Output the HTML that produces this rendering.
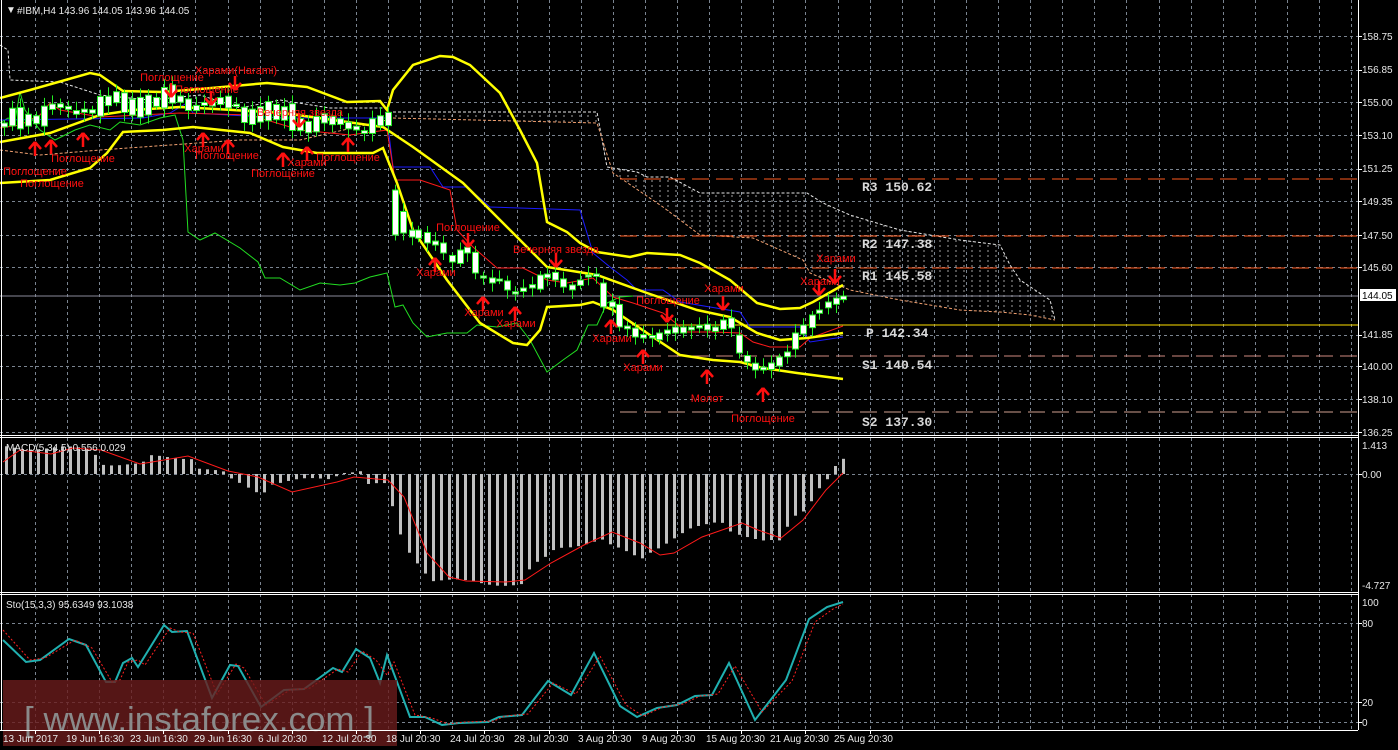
<!DOCTYPE html>
<html><head><meta charset="utf-8">
<style>
html,body{margin:0;padding:0;background:#000;}
body{width:1398px;height:750px;overflow:hidden;position:relative;font-family:"Liberation Sans","Noto Sans CJK SC",sans-serif;}
svg{position:absolute;left:0;top:0;}
.ax{fill:#e8e8e8;font-size:10px;font-family:"Liberation Sans",sans-serif;}
.lb{fill:#ff1010;font-size:11px;font-family:"Liberation Sans",sans-serif;}
.pv{fill:#d8d8d8;font-size:13px;font-weight:bold;font-family:"Liberation Mono",monospace;}
</style></head><body>
<svg id="s" width="1398" height="750" viewBox="0 0 1398 750" xmlns="http://www.w3.org/2000/svg">
<defs>
<pattern id="hat" width="8" height="5" patternUnits="userSpaceOnUse">
<line x1="4" y1="0" x2="4" y2="2" stroke="#d8d8d8" stroke-width="1"/>
</pattern>
<clipPath id="cmain"><rect x="0" y="0" width="1358" height="435"/></clipPath>
</defs>
<g id="grid"></g>
<g clip-path="url(#cmain)">
<polygon points="393,112 597,112 607,167 637,172 647,177 670,177 700,193 807,193 823,203 850,215 900,230 960,240 1000,245 1010,265 1020,280 1050,300 1055,320 1030,315 1000,312 960,310 900,300 850,290 810,273 803,260 753,238 700,235 663,207 613,173 597,123 393,118" fill="url(#hat)" opacity="0.75"/>
<polyline points="393,112 597,112 607,167 637,172 647,177 670,177 700,193 807,193 823,203 850,215 900,230 960,240 1000,245 1010,265 1020,280 1050,300 1055,320" fill="none" stroke="#e6e6e6" stroke-width="1" stroke-dasharray="3,2"/>
<polyline points="393,118 597,123 613,173 663,207 700,235 753,238 803,260 810,273 850,290 900,300 960,310 1000,312 1030,315 1055,320" fill="none" stroke="#f0a070" stroke-width="1" stroke-dasharray="3,2"/>
<polyline points="0,45 8,50 10,80 60,82 100,95 150,100 200,95 240,108 280,100 330,108 387,108" fill="none" stroke="#e6e6e6" stroke-width="1" stroke-dasharray="3,2"/>
<polyline points="0,150 40,155 100,150 170,145 240,140 300,140 387,120" fill="none" stroke="#f0a070" stroke-width="1" stroke-dasharray="3,2"/>
</g>
<line x1="620" y1="179" x2="1358" y2="179" stroke="#ff5a1e" stroke-dasharray="17,7"/>
<line x1="620" y1="236" x2="1358" y2="236" stroke="#ff5a1e" stroke-dasharray="17,7"/>
<line x1="620" y1="268" x2="1358" y2="268" stroke="#ff5a1e" stroke-dasharray="17,7"/>
<line x1="632" y1="325" x2="1358" y2="325" stroke="#ffe000"/>
<line x1="620" y1="356" x2="1358" y2="356" stroke="#d08a80" stroke-dasharray="17,7"/>
<line x1="620" y1="412" x2="1358" y2="412" stroke="#d0a090" stroke-dasharray="17,7"/>
<line x1="0" y1="296" x2="1358" y2="296" stroke="#8a8a9a"/>
<text class="pv" x="862" y="191">R3 150.62</text>
<text class="pv" x="862" y="248">R2 147.38</text>
<text class="pv" x="862" y="280">R1 145.58</text>
<text class="pv" x="866" y="337">P 142.34</text>
<text class="pv" x="862" y="369">S1 140.54</text>
<text class="pv" x="862" y="426">S2 137.30</text>
<polyline fill="none" stroke="#22dd22" stroke-width="1" points="0,123 8,118 15,120 20,92 25,110 40,130 55,140 65,135 75,130 90,125 110,130 120,122 140,125 160,118 175,115 183,140 188,232 200,240 215,233 240,248 258,262 265,278 280,278 300,290 320,283 340,285 355,283 370,277 387,273 395,307 403,305 413,323 427,337 447,333 467,333 477,325 497,327 517,323 530,340 547,372 563,360 577,350 588,325 597,325 607,303 620,297 633,296"/>
<polyline fill="none" stroke="#1a1aff" stroke-width="1" points="0,120 143,118 170,113 187,103 193,113 283,118 387,118 393,167 430,167 443,187 467,187 490,207 580,210 593,253 610,267 627,280 637,290 663,290 680,302 740,312 750,327 800,327 810,342 843,337"/>
<polyline fill="none" stroke="#ff1a1a" stroke-width="1" points="0,128 20,125 40,115 50,103 60,110 100,117 180,113 250,115 300,130 350,135 387,130 395,180 420,180 450,190 457,230 473,247 497,268 523,268 547,280 567,283 593,278 613,297 633,303 663,313 687,332 713,332 740,333 753,342 770,347 800,347 810,338 843,326"/>
<g fill="none" stroke="#ffff00" stroke-width="2.5">
<polyline points="0,98 30,90 90,73 100,75 123,91 163,92 200,89 267,83 307,87 347,102 380,101 387,110 393,90 413,65 440,56 453,57 470,65 500,93 520,130 537,163 547,222 567,232 580,243 597,252 630,257 647,253 680,255 700,263 730,280 757,303 780,309 800,308 813,302 843,285"/>
<polyline points="0,142 50,133 100,115 133,110 180,107 233,110 283,113 333,120 383,127 413,147 463,183 513,233 547,267 597,275 647,293 697,310 730,317 757,333 780,340 807,338 843,333"/>
<polyline points="0,183 50,180 90,168 107,153 123,132 163,130 193,127 250,133 283,147 317,153 373,153 383,148 397,183 413,230 447,280 480,323 513,343 527,345 540,330 547,307 580,305 593,302 613,310 647,333 680,355 713,360 740,362 763,368 797,373 843,379"/>
</g>
<g id="candles"></g>
<g id="arrows" fill="#ff1010" stroke="#ff1010"></g>
<g class="lb" text-anchor="middle">
<text x="172" y="81">Поглощение</text>
<text x="236" y="74">Харами(Harami)</text>
<text x="207" y="93">Поглощение</text>
<text x="300" y="116">Вечерняя звезда</text>
<text x="83" y="162">Поглощение</text>
<text x="35" y="175">Поглощение</text>
<text x="52" y="187">Поглощение</text>
<text x="204" y="152">Харами</text>
<text x="227" y="159">Поглощение</text>
<text x="283" y="177">Поглощение</text>
<text x="307" y="166">Харами</text>
<text x="348" y="161">Поглощение</text>
<text x="468" y="231">Поглощение</text>
<text x="436" y="276">Харами</text>
<text x="556" y="253">Вечерняя звезда</text>
<text x="484" y="316">Харами</text>
<text x="516" y="327">Харами</text>
<text x="612" y="342">Харами</text>
<text x="668" y="304">Поглощение</text>
<text x="643" y="371">Харами</text>
<text x="724" y="292">Харами</text>
<text x="707" y="402">Молот</text>
<text x="763" y="422">Поглощение</text>
<text x="836" y="262">Харами</text>
<text x="820" y="285">Харами</text>
</g>
<g id="macd" fill="#c0c0c0"></g>
<polyline fill="none" stroke="#ff1a1a" stroke-width="1" points="3,462 20,450 51,454 73,448 101,450 140,464 188,456 228,471 258,477 292,492 337,482 354,477 388,480 404,497 427,553 449,577 466,581 506,582 525,580 551,563 584,545 612,532 640,543 660,555 674,553 702,537 742,523 758,530 781,538 803,520 826,490 843,473"/>
<polyline fill="none" stroke="#20b0b0" stroke-width="2" points="3,640 26,662 40,660 69,639 86,645 106,682 115,682 123,663 132,658 138,667 164,625 172,632 187,631 212,698 230,665 238,666 261,707 284,690 304,689 333,668 342,672 356,649 370,658 380,683 387,655 410,717 425,717 442,725 459,723 488,722 499,717 522,715 548,681 571,695 594,653 620,706 637,717 657,708 677,705 695,696 712,695 729,663 755,720 786,680 809,619 827,607 843,602"/>
<polyline fill="none" stroke="#ff2020" stroke-width="1" stroke-dasharray="2,2" points="3,630 30,660 45,658 75,640 92,648 112,682 120,680 128,662 138,660 145,665 170,628 180,632 193,633 217,694 236,664 244,668 266,705 290,690 310,688 338,669 348,672 362,651 376,660 387,675 394,662 415,715 432,718 448,724 465,722 494,721 505,716 528,714 553,683 576,694 600,656 626,705 643,716 663,707 683,704 700,696 718,694 735,666 762,712 792,681 815,622 833,609 843,604"/>
<rect x="3" y="680" width="394" height="66" fill="#6a1c1c" opacity="0.8"/>
<text x="24" y="731" fill="#8a8a8a" font-size="34" font-family="Liberation Sans,sans-serif" textLength="350" lengthAdjust="spacingAndGlyphs">[ www.instaforex.com ]</text>
<g stroke="#ffffff" stroke-width="1" fill="none">
<line x1="1358.5" y1="0" x2="1358.5" y2="730"/>
<line x1="0" y1="435.5" x2="1358" y2="435.5"/>
<line x1="0" y1="437.5" x2="1358" y2="437.5"/>
<line x1="0" y1="592.5" x2="1358" y2="592.5"/>
<line x1="0" y1="594.5" x2="1358" y2="594.5"/>
<line x1="0" y1="730.5" x2="1358" y2="730.5"/>
<line x1="1.5" y1="0" x2="1.5" y2="730"/>
</g>
<g id="axis"></g>
<text x="6" y="13" class="ax" font-size="9">▼</text>
<text x="17" y="14" class="ax">#IBM,H4  143.96 144.05 143.96 144.05</text>
<text x="6" y="451" class="ax" fill="#ddd">MACD(5,34,5) 0.556 0.029</text>
<text x="6" y="608" class="ax">Sto(15,3,3) 95.6349 93.1038</text>
<rect x="1360" y="289" width="36" height="12" fill="#fff"/>
<text x="1362" y="299" font-size="10" fill="#000" font-family="Liberation Sans,sans-serif">144.05</text>
<g class="ax">
<text x="1362" y="40">158.75</text><text x="1362" y="73">156.85</text><text x="1362" y="106">155.00</text>
<text x="1362" y="139">153.10</text><text x="1362" y="172">151.25</text><text x="1362" y="205">149.35</text>
<text x="1362" y="239">147.50</text><text x="1362" y="271">145.60</text><text x="1362" y="338">141.85</text>
<text x="1362" y="370">140.00</text><text x="1362" y="403">138.10</text><text x="1362" y="436">136.25</text>
<text x="1362" y="449">1.413</text><text x="1362" y="478">0.00</text><text x="1362" y="589">-4.727</text>
<text x="1362" y="606">100</text><text x="1362" y="627">80</text><text x="1362" y="706">20</text><text x="1362" y="726">0</text>
</g>
<g class="ax" font-size="9.5">
<text x="3" y="742">13 Jun 2017</text><text x="66" y="742">19 Jun 16:30</text><text x="130" y="742">23 Jun 16:30</text>
<text x="194" y="742">29 Jun 16:30</text><text x="258" y="742">6 Jul 20:30</text><text x="322" y="742">12 Jul 20:30</text>
<text x="386" y="742">18 Jul 20:30</text><text x="450" y="742">24 Jul 20:30</text><text x="514" y="742">28 Jul 20:30</text>
<text x="578" y="742">3 Aug 20:30</text><text x="642" y="742">9 Aug 20:30</text><text x="706" y="742">15 Aug 20:30</text>
<text x="770" y="742">21 Aug 20:30</text><text x="834" y="742">25 Aug 20:30</text>
</g>
</svg>
<script>
(function(){
var NS="http://www.w3.org/2000/svg";
function el(p,t,a){var e=document.createElementNS(NS,t);for(var k in a)e.setAttribute(k,a[k]);p.appendChild(e);return e;}
var g=document.getElementById('grid');
var gc="#7a8490";
for(var x=35;x<1358;x+=32.1){el(g,'line',{x1:Math.round(x)+.5,y1:0,x2:Math.round(x)+.5,y2:730,stroke:gc,'stroke-dasharray':'3,3'});}
[36,70,102,135,169,201,235,267,335,366,399,432,474,623,702,722].forEach(function(y){el(g,'line',{x1:0,y1:y+.5,x2:1358,y2:y+.5,stroke:gc,'stroke-dasharray':'3,3'});});
var ax=document.getElementById('axis');
[36,70,102,135,169,201,235,267,335,366,399,432,474,623,702,722].forEach(function(y){el(ax,'line',{x1:1358,y1:y+.5,x2:1362,y2:y+.5,stroke:'#fff'});});
for(var i=0;i<14;i++){var xx=35+64.2*i;el(ax,'line',{x1:Math.round(xx)+.5,y1:730,x2:Math.round(xx)+.5,y2:734,stroke:'#fff'});}
var c=document.getElementById('candles');
function mid(x){var p=[[0,120],[50,112],[100,105],[133,103],[180,100],[233,108],[283,118],[333,125],[387,125]];for(var i=1;i<p.length;i++){if(x<=p[i][0]){var t=(x-p[i-1][0])/(p[i][0]-p[i-1][0]);return p[i-1][1]+t*(p[i][1]-p[i-1][1]);}}return 125;}
var cl=[];
for(var x=4;x<390;x+=8){var m=mid(x)+9*Math.sin(x*0.37)+6*Math.cos(x*0.9);cl.push([x,m]);}
var L=[[395,212],[403,233],[412,237],[418,230],[427,243],[435,245],[443,253],[452,262],[460,250],[467,253],[475,273],[483,278],[492,283],[499,280],[507,290],[515,293],[523,288],[532,287],[540,275],[547,275],[555,280],[563,287],[572,285],[580,280],[588,275],[596,275],[603,303],[612,307],[619,327],[627,326],[635,337],[643,338],[652,337],[659,333],[667,330],[675,333],[683,327],[691,327],[699,327],[707,330],[715,327],[723,320],[731,328],[739,353],[747,362],[755,370],[763,370],[771,363],[779,357],[787,352],[795,333],[803,325],[812,315],[819,310],[828,302],[836,298],[843,296]];
cl=cl.concat(L);
for(var i=0;i<cl.length;i++){
 var x=cl[i][0],y=cl[i][1],prev=i?cl[i-1][1]:y+4;
 var o=prev+3*Math.sin(i*1.7),top=Math.min(o,y),bot=Math.max(o,y);
 if(x==395){top=190;bot=235;}
 if(x==603){top=283;bot=307;}
 if(x==739){top=335;bot=353;}
 if(bot-top<2){top-=1;bot+=1;}
 var wt=top-3-6*Math.abs(Math.sin(i*2.3)),wb=bot+3+6*Math.abs(Math.cos(i*1.9));
 el(c,'line',{x1:x+.5,y1:wt,x2:x+.5,y2:wb,stroke:'#22ee22'});
 el(c,'rect',{x:x-2.5,y:top,width:6,height:bot-top,fill:'#fff',stroke:'#22ee22','stroke-width':1});
}
var a=document.getElementById('arrows');
function up(x,y){el(a,'path',{d:'M'+x+' '+y+' l-6 7 M'+x+' '+y+' l6 7 M'+x+' '+y+' v14','stroke-width':2.5,fill:'none'});}
function dn(x,y){el(a,'path',{d:'M'+x+' '+y+' l-6 -7 M'+x+' '+y+' l6 -7 M'+x+' '+y+' v-14','stroke-width':2.5,fill:'none'});}
[[35,142],[51,140],[83,133],[203,133],[228,140],[283,153],[307,147],[348,138],[435,258],[483,297],[515,307],[611,320],[643,350],[707,370],[763,388]].forEach(function(p){up(p[0],p[1]);});
[[171,97],[211,105],[235,90],[299,127],[468,247],[556,267],[667,322],[723,310],[819,295],[835,283]].forEach(function(p){dn(p[0],p[1]);});
var k=[[6,447],[90,449],[100,463],[140,465],[150,457],[190,457],[195,467],[225,474],[230,480],[260,493],[270,483],[330,478],[340,471],[360,471],[365,485],[385,485],[395,520],[403,546],[420,567],[430,580],[520,585],[530,568],[545,558],[555,548],[600,540],[610,547],[640,558],[650,550],[690,530],[700,527],[720,520],[730,530],[760,542],[780,542],[790,517],[800,512],[808,503],[816,488],[824,483],[830,471],[836,465],[843,460]];
function mv(x){for(var i=1;i<k.length;i++){if(x<=k[i][0]){var t=(x-k[i-1][0])/(k[i][0]-k[i-1][0]);return k[i-1][1]+t*(k[i][1]-k[i-1][1]);}}return 460;}
var mg=document.getElementById('macd');
for(var x=5;x<=843;x+=8.05){var v=mv(x)+2*Math.sin(x*0.7);var t=Math.min(v,474),h=Math.abs(v-474);el(mg,'rect',{x:Math.round(x),y:t,width:3,height:Math.max(h,1)});}
})();
</script>
</body></html>
